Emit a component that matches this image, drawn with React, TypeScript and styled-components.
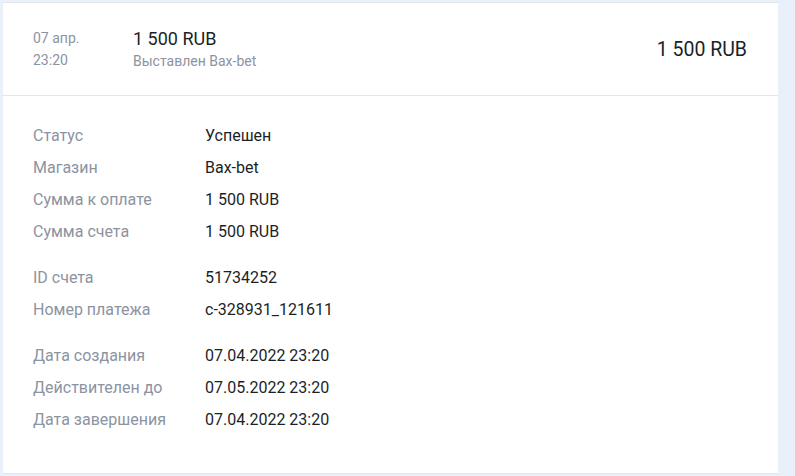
import React from 'react';
import styled, {createGlobalStyle} from 'styled-components';

const GlobalStyle = createGlobalStyle`
    html, body {
        margin: 0;
        padding: 0;
        background: #e9f0fa;
        font-family: Roboto, "Liberation Sans", sans-serif;
    }
`

type Row = { label: string, value: string }

const groups: Row[][] = [
    [
        {label: 'Статус', value: 'Успешен'},
        {label: 'Магазин', value: 'Bax-bet'},
        {label: 'Сумма к оплате', value: '1 500 RUB'},
        {label: 'Сумма счета', value: '1 500 RUB'},
    ],
    [
        {label: 'ID счета', value: '51734252'},
        {label: 'Номер платежа', value: 'c-328931_121611'},
    ],
    [
        {label: 'Дата создания', value: '07.04.2022 23:20'},
        {label: 'Действителен до', value: '07.05.2022 23:20'},
        {label: 'Дата завершения', value: '07.04.2022 23:20'},
    ],
]

function App() {
    return (
        <Page>
            <GlobalStyle/>
            <Card>
                <Header>
                    <DateCol>
                        <span>07 апр.</span>
                        <span>23:20</span>
                    </DateCol>
                    <Summary>
                        <Amount>1 500 RUB</Amount>
                        <Note>Выставлен Bax-bet</Note>
                    </Summary>
                    <Total>1 500 RUB</Total>
                </Header>
                <Details>
                    {groups.map((group, i) => (
                        <Group key={i}>
                            {group.map(row => (
                                <InfoRow key={row.label}>
                                    <Label>{row.label}</Label>
                                    <Value>{row.value}</Value>
                                </InfoRow>
                            ))}
                        </Group>
                    ))}
                </Details>
            </Card>
        </Page>
    )
}

export default App;

const Page = styled.div`
    height: 476px;
    padding: 2px 17px 0 3px;
    box-sizing: border-box;
    overflow: hidden;
`
const Card = styled.div`
    background: #fff;
    border-top: 1px solid #e3e6eb;
    border-bottom: 1px solid #e3e6eb;
`
const Header = styled.div`
    height: 92px;
    display: flex;
    align-items: center;
    padding: 0 31px 0 30px;
    border-bottom: 1px solid #e3e6eb;
`
const DateCol = styled.div`
    width: 100px;
    display: flex;
    flex-direction: column;
    gap: 5px;
    font-size: 14px;
    line-height: 17px;
    color: #8c93a1;
`
const Summary = styled.div`
    display: flex;
    flex-direction: column;
    gap: 4px;
    flex-grow: 1;
`
const Amount = styled.span`
    font-size: 18px;
    line-height: 21px;
    color: #1c1f26;
`
const Note = styled.span`
    font-size: 14px;
    line-height: 17px;
    color: #8c93a1;
`
const Total = styled.span`
    font-size: 19.5px;
    color: #1c1f26;
`
const Details = styled.div`
    height: 377px;
    padding: 23px 30px 0;
    box-sizing: border-box;
    display: flex;
    flex-direction: column;
    gap: 14px;
`
const Group = styled.div`
    display: flex;
    flex-direction: column;
`
const InfoRow = styled.div`
    display: flex;
    height: 32px;
    align-items: center;
    font-size: 16px;
`
const Label = styled.span`
    width: 172px;
    color: #8c93a1;
`
const Value = styled.span`
    color: #1c1f26;
`
